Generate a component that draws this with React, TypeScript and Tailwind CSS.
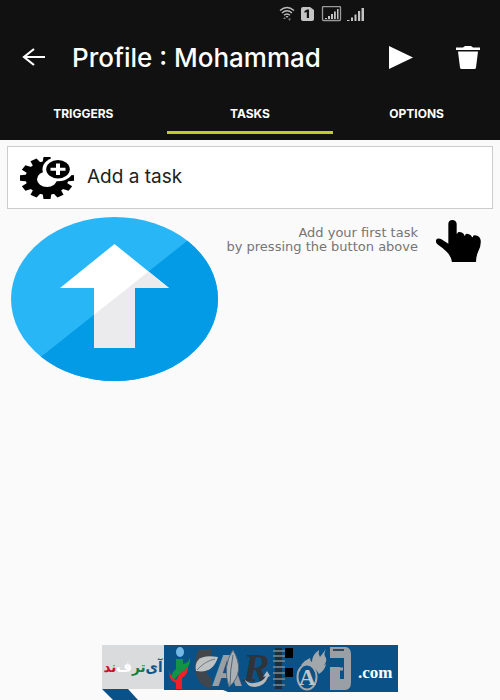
import React from "react";

const toothAngles = [0, 30, 60, 90, 120, 150, 180, 210, 240, 270, 300, 330];

function StatusBar() {
  return (
    <div className="flex h-7 items-center pl-[279px]">
      <svg className="h-4 w-[88px]" viewBox="0 0 88 16" aria-hidden="true">
        <g fill="none" stroke="#bdbdbd" strokeWidth="1.4">
          <path d="M1 4.5 Q8 -1.5 15 4.5" />
          <path d="M3 7 Q8 2.5 13 7" />
          <path d="M5 9.3 Q8 6.6 11 9.3" />
        </g>
        <path d="M6.5 10h3L8 12z" fill="#bdbdbd" />
        <path d="M4 13l1.5-2L7 13zM9 12.5h3L10.500 15z" fill="#777" />
        <path d="M24 1h7l4 3v9q0 2-2 2h-9q-2 0-2-2V3q0-2 2-2z" fill="#c4c4c4" />
        <path d="M25.500 5L28 3.500h2V12h-2.200V6l-2.300.8z" fill="#111" />
        <rect x="43.500" y="0.500" width="18" height="14" rx="1" fill="none" stroke="#9a9a9a" strokeWidth="1.300" />
        <g fill="#c4c4c4">
          <path d="M46 13v-1h2v1zM49 13v-3h2v3zM52 13V8h2v5zM55 13V5.500h1.800V13zM58 13V3h1.500v10z" />
          <path d="M68 15v-1h2.500v1zM72 15v-3.500h2V15zM75.500 15V8.500h2V15zM79 15V5h2.200v10zM82.500 15V2H85v13z" />
        </g>
      </svg>
    </div>
  );
}

function Header() {
  return (
    <header className="bg-[#111111] text-white">
      <StatusBar />
      <div className="flex h-[58px] items-center pl-[22px] pr-5">
        <button aria-label="Back" className="mr-[27px] shrink-0">
          <svg className="h-[18px] w-[23px]" viewBox="0 0 23 18" fill="none" stroke="white" strokeWidth="2.200" aria-hidden="true">
            <path d="M12 1L2 9l10 8M2 9h21" />
          </svg>
        </button>
        <h1 className="grow whitespace-nowrap text-[26px] font-medium">Profile : Mohammad</h1>
        <button aria-label="Run profile" className="mr-[43px] shrink-0">
          <svg className="h-[23px] w-6" viewBox="0 0 24 23" fill="white" aria-hidden="true">
            <path d="M0 0l24 11.500L0 23z" />
          </svg>
        </button>
        <button aria-label="Delete profile" className="shrink-0">
          <svg className="h-[23px] w-6" viewBox="0 0 24 23" fill="white" aria-hidden="true">
            <path d="M0 1.500h7L9 0h6l2 1.500h7V4H0zM2 5.500h20L20 21.500q-.2 1.500-1.500 1.500h-13Q4.200 23 4 21.500z" />
          </svg>
        </button>
      </div>
      <nav className="grid h-[54px] grid-cols-3 text-xs font-bold">
        <button className="mb-1.5 border-b-[3px] border-transparent pt-2.5">TRIGGERS</button>
        <button aria-current="page" className="mb-1.5 border-b-[3px] border-[#c0ca33] pt-2.5">TASKS</button>
        <button className="mb-1.5 border-b-[3px] border-transparent pt-2.5">OPTIONS</button>
      </nav>
    </header>
  );
}

function GearPlus() {
  return (
    <svg className="h-[42px] w-[54px]" viewBox="0 0 54 54" preserveAspectRatio="none" aria-hidden="true">
      <circle cx="27" cy="27" r="21.500" />
      {toothAngles.map((a) => (
        <path key={a} d="M22.500 8L23.500 0h7l1 8z" transform={`rotate(${a} 27 27)`} />
      ))}
      <circle cx="27" cy="28.500" r="10" fill="white" />
      <circle cx="38" cy="15.700" r="15.500" fill="white" />
      <circle cx="38" cy="15.700" r="11.800" />
      <path d="M36 8.500h4v5.200h5.500v4H40V23h-4v-5.300h-5.500v-4H36z" fill="white" />
    </svg>
  );
}

function UpArrow() {
  return (
    <svg className="h-[164px] w-[207px] shrink-0" viewBox="0 0 207 164" aria-hidden="true">
      <defs>
        <clipPath id="disc"><ellipse cx="103.500" cy="82" rx="103.500" ry="82" /></clipPath>
        <clipPath id="arrow"><path d="M103.500 27L158 71h-34v60H83V71H49z" /></clipPath>
      </defs>
      <g clipPath="url(#disc)">
        <path d="M0 0h207v164H0z" fill="#29b6f6" />
        <path d="M31 139L176 24 207 0V164H0z" fill="#039be5" />
      </g>
      <g clipPath="url(#arrow)">
        <path d="M0 0h207v164H0z" fill="white" />
        <path d="M31 139L176 24 207 0V164H31z" fill="#ebebed" />
      </g>
    </svg>
  );
}

function PointingHand() {
  return (
    <svg className="h-[42px] w-[45px] shrink-0" viewBox="0 0 135 126" preserveAspectRatio="none" aria-hidden="true">
      <path d="M37 11Q38 0 49 0t13 11v30l3-1q-1-4 4-4 14 0 16 11l3-1q-1-5 5-5 13 2 15 11l3-1q-1-5 6-5 15 1 17 15 2 18-8 35-6 14-6 30H48Q45 108 32 95 20 83 6 74-2 68 0 60q5-7 15-3l22 14z" />
    </svg>
  );
}

function Watermark() {
  return (
    <footer className="mx-auto mt-auto w-[296px]">
      <div className="flex h-[47px] items-start">
        <div dir="rtl" lang="fa" className="flex h-11 w-[62px] shrink-0 items-center justify-center whitespace-nowrap bg-[#d9dbdc] font-['DejaVu_Sans_Condensed','DejaVu_Sans',sans-serif] text-[15px] font-bold">
          <span className="text-[#125487]">آی</span>
          <span className="text-[#16803b]">تر</span>
          <span className="text-white">ف</span>
          <span className="text-[#c9152b]">ند</span>
        </div>
        <svg className="h-[47px] grow overflow-visible" viewBox="0 0 234 47" preserveAspectRatio="none" aria-hidden="true">
          <path d="M0 0h234v47H64l-5-2H0z" fill="#095187" />
          <ellipse cx="16" cy="7" rx="4" ry="5" fill="#73b9e4" />
          <path d="M12 14h7v5q6-1 7-7 1 10-7 15-7 4-9 9l-3-1q-1-6 5-11z" fill="#129347" />
          <path d="M6 24q-1 8 6 11l4-7q7-3 8-8 1 9-6 13v11h-6v-6Q3 34 6 24z" fill="#ef2027" />
          <path d="M47 4H35q-4 6-4 19 1 18 17 21V33q-6-2-6-12 0-7 5-8z" fill="#40464d" />
          <path d="M32 26Q29 8 54 12q-5 17-22 14z" fill="#bfc2c3" />
          <path d="M33 25q8-9 18-11" fill="none" stroke="#737b82" />
          <text x="47" y="41" fontFamily="Liberation Sans" fontSize="44" fontWeight="700" fill="#999fa4">A</text>
          <path d="M69 5q-11 16-4 37Q82 27 69 5z" fill="#aab0b3" stroke="#51677a" />
          <path d="M69 10q-3 15-3 31" fill="none" stroke="#51677a" />
          <text x="79" y="36" fontFamily="Liberation Serif" fontSize="40" fontStyle="italic" fontWeight="700" fill="#30343a">R</text>
          <path d="M80 32q2 7 10 6 9-1 12-7l-3 1 4-6 3 5-2 1q-3 9-13 10-9 0-11-10z" fill="#b6babc" />
          <path d="M111 3h7v41h-7z" fill="#202d38" />
          <path d="M109 6h12M109 11h12M109 16h12M109 22h12M109 28h12M109 34h12M109 40h12" stroke="#7e8991" strokeWidth="1.500" />
          <path d="M121 3h8v10h-8zM121 23h8v9h-8z" fill="#000" />
          <path d="M137 20q4-5 9-7 0 3 2 4 0-7 7-12-1 4 1 7l6-8q-3 5 0 9 1 4-2 7l2-1q-1 6-7 10-4-9-18-9z" fill="#a1a7ab" />
          <ellipse cx="143" cy="32" rx="9.500" ry="12.500" fill="#095187" stroke="#a4a8ab" strokeWidth="2" />
          <text x="135" y="40" fontFamily="Liberation Serif" fontSize="23" fontWeight="700" fill="#c3c6c8">A</text>
          <path d="M166 2h16q5 1 5 7v28q0 8-6 8h-15V34h14V13h-14z" fill="#999fa4" />
          <path d="M166 22h10v12h-10z" fill="#999fa4" />
          <path d="M169 5h11" stroke="#34495a" strokeWidth="2" />
          <path d="M176 24h3" stroke="#999fa4" strokeWidth="3" />
          <text x="194" y="33" fontFamily="Liberation Serif" fontSize="17" fontWeight="700" fill="#ffffff">.com</text>
        </svg>
      </div>
      <svg className="-mt-[3px] block h-[11px] w-[37px]" viewBox="0 0 37 11" aria-hidden="true">
        <path d="M0 0h26l10 11H11z" fill="#095187" />
      </svg>
    </footer>
  );
}

export default function App() {
  return (
    <div className="flex min-h-screen flex-col bg-[#fafafa] font-[Inter,Roboto,sans-serif]">
      <Header />
      <main>
        <button className="mx-[7px] mt-1.5 flex h-[63px] w-[calc(100%-14px)] items-center gap-[13px] border border-[#cccccc] bg-white pl-3 text-left">
          <GearPlus />
          <span className="text-[19px] text-[#212121]">Add a task</span>
        </button>
        <section className="flex items-start justify-between pl-[11px] pr-[19px] pt-2">
          <UpArrow />
          <div className="flex items-start gap-[18px] pt-[3px]">
            <p className="whitespace-nowrap pt-1.5 text-right font-['DejaVu_Sans',sans-serif] text-[13px] leading-[14px] text-[#757575]">
              Add your first task
              <br />
              by pressing the button above
            </p>
            <PointingHand />
          </div>
        </section>
      </main>
      <Watermark />
    </div>
  );
}
